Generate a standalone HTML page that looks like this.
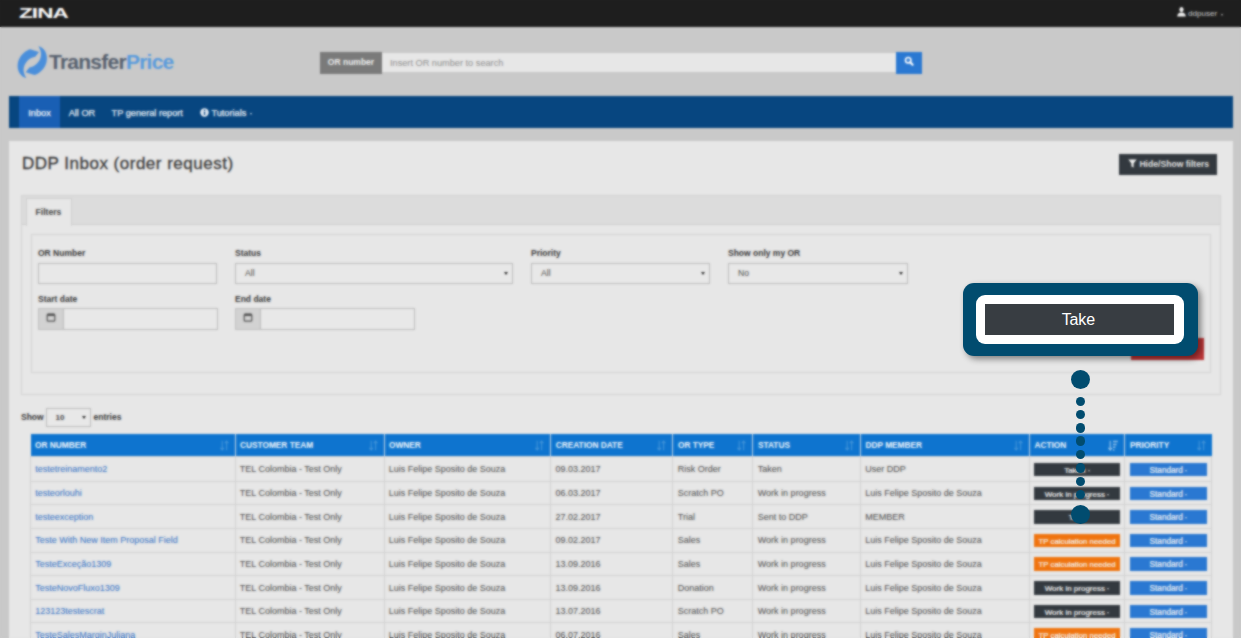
<!DOCTYPE html>
<html><head><meta charset="utf-8"><title>DDP Inbox</title>
<style>
*{box-sizing:border-box;margin:0;padding:0}
html,body{width:1241px;height:638px;overflow:hidden;background:#c9c9c9;font-family:"Liberation Sans",sans-serif;font-size:9px;color:#3c3c3c}
#bg{position:absolute;left:-30px;top:-30px;width:1301px;height:698px;background:#c9c9c9;overflow:hidden}
#pg{position:absolute;left:30px;top:30px;width:1241px;height:668px}
.abs{position:absolute}
#topbar{left:-30px;top:-30px;width:1301px;height:57px;background:#1f1f1f}
#zina{left:19px;top:4px;color:#fff;font-weight:bold;font-size:15px;line-height:18px;transform:scaleX(1.5);transform-origin:0 50%;letter-spacing:-0.6px}
#user{left:1177px;top:7.4px;width:50px;height:12px;color:#cfcfcf;font-size:8.1px;line-height:12px;white-space:nowrap}
#user i{position:absolute;left:43.5px;top:6.2px;width:0;height:0;border-left:1.6px solid transparent;border-right:1.6px solid transparent;border-top:2px solid #bbb}
#logotxt{left:49px;top:47.3px;font-size:21px;line-height:30px;font-weight:bold;color:#56606e;letter-spacing:-0.75px;white-space:nowrap}
#logotxt b{color:#5a9bdc}
#sadd{left:320px;top:52px;width:62px;height:21.5px;background:#7a7a7a;color:#f0f0f0;font-weight:bold;font-size:8.5px;line-height:21.5px;text-align:center}
#sinp{left:382px;top:53px;width:514px;height:19.2px;background:#e6e6e6;color:#8e8e8e;font-size:9.2px;line-height:20.4px;padding-left:8px}
#sbtn{left:896px;top:51.5px;width:26px;height:22px;background:#2a78d2}
#nav{left:9px;top:96px;width:1223.5px;height:32px;background:#074680;color:#e4ecf5;font-size:9.2px;line-height:32px}
#nav .act{left:10px;top:0;width:41px;height:32px;background:#1a5fb4}
#nav span{position:absolute;top:0.7px;white-space:nowrap;-webkit-text-stroke:0.25px #e4ecf5}
#nav i{display:inline-block;width:0;height:0;border-left:1.7px solid transparent;border-right:1.7px solid transparent;border-top:2.2px solid #d5dfea;margin-left:4px;vertical-align:1.2px}
#panel{left:9px;top:141px;width:1223.5px;height:560px;background:#e6e6e6}
#h1{left:22px;top:152.6px;font-size:17px;line-height:22px;color:#3b3b3b;white-space:nowrap;letter-spacing:0.5px;-webkit-text-stroke:0.3px #3b3b3b}
#hsbtn{left:1119px;top:153.5px;width:98px;height:21.5px;background:#343a40;color:#e2e2e2;font-weight:bold;font-size:8.6px;line-height:21.5px;white-space:nowrap}
#tabs{left:21px;top:194.5px;width:1199.8px;height:200.5px;border:1px solid #d3d3d3}
#tabhead{left:0;top:0;width:1197.8px;height:29.5px;background:#dcdcdc;border-bottom:1px solid #d0d0d0}
#tab{left:3.5px;top:2.5px;width:46px;height:28px;background:#e6e6e6;border:1px solid #d0d0d0;border-bottom:none;font-size:8.6px;font-weight:bold;color:#444;text-align:center;line-height:27px}
#fs{left:31px;top:234.2px;width:1179.7px;height:139.3px;border:1px solid #d3d3d3}
.lbl{font-weight:bold;font-size:8.5px;line-height:12px;color:#3a3a3a;white-space:nowrap}
.inp{height:20.5px;border:1px solid #bcbcbc;background:#e8e8e8;font-size:8.6px;line-height:18.5px;color:#484848;padding-left:9px}
.inp i{position:absolute;right:4px;top:7.5px;width:0;height:0;border-left:2.2px solid transparent;border-right:2.2px solid transparent;border-top:3.2px solid #333}
.addon{height:21.5px;width:26px;background:#d2d2d2;border:1px solid #c2c2c2}
#redbtn{left:1130.5px;top:338px;width:73.5px;height:22px;background:#c0393b}
table{position:absolute;left:30px;top:434.2px;border-collapse:collapse;table-layout:fixed;width:1181.5px}
th{background:#0e75cf;color:#f4f8fc;font-weight:bold;font-size:8.3px;text-align:left;height:22px;padding:0 0 0 4.5px;border-left:1.5px solid #c9d6e4;position:relative;white-space:nowrap}
th:first-child{border-left:none}
td{height:23.6px;border:1px solid #d2d2d2;padding:0.4px 0 0 4.3px;font-size:9px;color:#4a4a4a;white-space:nowrap;overflow:hidden;vertical-align:middle}
tbody tr:first-child td{height:25.1px;padding-top:1.2px}
td a{color:#2f6fc4;text-decoration:none}
.bt{display:block;height:13.6px;line-height:15px;font-size:7.8px;color:#f4f4f4;-webkit-text-stroke:0.2px #f4f4f4;text-align:center;margin:0.2px 0 0 0;white-space:nowrap}
.bt u{display:inline-block;width:0;height:0;border-left:1.6px solid transparent;border-right:1.6px solid transparent;border-top:2px solid #e8e8e8;margin-left:2.5px;vertical-align:1px;opacity:.85}
.dk{background:#343a40;width:85.6px;font-size:8px}
.or{background:#f0750f;width:85.6px}
.bl{background:#2a78d2;width:77.4px;font-size:8.2px}
th .so{position:absolute;right:6px;top:5.7px;opacity:.22}
#blur{position:absolute;left:0;top:0;width:1241px;height:638px;backdrop-filter:blur(1px);-webkit-backdrop-filter:blur(1px);opacity:.85}
/* overlay */
#ov{position:absolute;left:0;top:0;width:1241px;height:638px}
#call{left:963px;top:283.2px;width:234.8px;height:72.8px;background:#014c6f;border-radius:11px;box-shadow:3px 3px 6px rgba(0,0,0,.45)}
#callin{left:13px;top:11.8px;width:207.6px;height:49px;background:#fff;border-radius:9px}
#take{left:9px;top:9px;width:188.7px;height:31px;background:#383d42;color:#fff;font-size:16px;line-height:31.4px;text-align:center;letter-spacing:-0.1px;text-indent:-2px}
.dot{position:absolute;background:#014c6f;border-radius:50%}
</style></head><body>
<div id="bg"><div id="pg">
 <div class="abs" id="topbar"></div>
 <div class="abs" id="zina">ZINA</div>
 <div class="abs" id="user"><svg width="9" height="10" viewBox="0 0 9 10" style="position:absolute;left:0;top:0"><ellipse cx="4.5" cy="2.6" rx="2.1" ry="2.5" fill="#f2f2f2"/><path d="M0.3 9.6 C0.3 6.6 2 5.6 4.5 5.6 C7 5.6 8.7 6.6 8.7 9.6Z" fill="#f2f2f2"/></svg><span style="position:absolute;left:11px;top:0.6px">ddpuser</span><i></i></div>
 <svg class="abs" id="logo" style="left:10px;top:38px" width="60" height="48" viewBox="0 0 798 638">
  <g fill="#4a8fdb"><path d="M268 148 C150 185 55 330 128 468 C150 505 185 527 216 532 C168 455 165 375 235 300 C265 268 300 252 336 248 L386 186 Z"/>
  <path d="M268 148 C150 185 55 330 128 468 C150 505 185 527 216 532 C168 455 165 375 235 300 C265 268 300 252 336 248 L386 186 Z" transform="rotate(180 297 320)"/></g>
 </svg>
 <div class="abs" id="logotxt">Transfer<b>Price</b></div>
 <div class="abs" id="sadd">OR number</div>
 <div class="abs" id="sinp">Insert OR number to search</div>
 <div class="abs" id="sbtn"><svg width="26" height="22" viewBox="0 0 26 22"><circle cx="12.2" cy="8.2" r="2.7" fill="none" stroke="#fff" stroke-width="1.6"/><path d="M14.2 10.3 L16.6 12.7" stroke="#fff" stroke-width="2.1" stroke-linecap="round"/></svg></div>
 <div class="abs" id="nav"><div class="abs act"></div>
  <span style="left:19.3px;color:#fff">Inbox</span><span style="left:59.7px">All OR</span><span style="left:102.6px">TP general report</span>
  <span style="left:191px"><svg width="9" height="9" viewBox="0 0 9 9" style="vertical-align:-1.5px"><circle cx="4.5" cy="4.5" r="4.2" fill="#e9eff6"/><rect x="3.8" y="3.7" width="1.5" height="3.2" fill="#074680"/><rect x="3.8" y="1.7" width="1.5" height="1.4" fill="#074680"/></svg> Tutorials<i></i></span>
 </div>
 <div class="abs" id="panel"></div>
 <div class="abs" id="h1">DDP Inbox (order request)</div>
 <div class="abs" id="hsbtn"><svg width="9" height="9" viewBox="0 0 9 9" style="margin-left:9px;vertical-align:-1px"><path d="M0.3 0.5 H8.7 L5.6 4.2 V8.6 L3.4 7.4 V4.2 Z" fill="#f2f2f2"/></svg> Hide/Show filters</div>
 <div class="abs" id="tabs"><div class="abs" id="tabhead"></div><div class="abs" id="tab">Filters</div></div>
 <div class="abs" id="fs"></div>
 <div class="abs lbl" style="left:38px;top:247px">OR Number</div>
 <div class="abs lbl" style="left:235px;top:247px">Status</div>
 <div class="abs lbl" style="left:531px;top:247px">Priority</div>
 <div class="abs lbl" style="left:728px;top:247px">Show only my OR</div>
 <div class="abs inp" style="left:38px;top:263px;width:179.2px"></div>
 <div class="abs inp" style="left:235px;top:263px;width:278px">All<i></i></div>
 <div class="abs inp" style="left:531px;top:263px;width:179px">All<i></i></div>
 <div class="abs inp" style="left:728px;top:263px;width:179.5px">No<i></i></div>
 <div class="abs lbl" style="left:38px;top:293px">Start date</div>
 <div class="abs lbl" style="left:235px;top:293px">End date</div>
 <div class="abs addon" style="left:38px;top:308px"><svg width="24" height="20" viewBox="0 0.8 24 20"><rect x="8.2" y="6" width="7.6" height="7" rx="1" fill="none" stroke="#555" stroke-width="1.2"/><rect x="8.2" y="5.6" width="7.6" height="2.2" fill="#555"/></svg></div>
 <div class="abs inp" style="left:63px;top:308px;width:154.5px;height:21.5px"></div>
 <div class="abs addon" style="left:235px;top:308px"><svg width="24" height="20" viewBox="0 0.8 24 20"><rect x="8.2" y="6" width="7.6" height="7" rx="1" fill="none" stroke="#555" stroke-width="1.2"/><rect x="8.2" y="5.6" width="7.6" height="2.2" fill="#555"/></svg></div>
 <div class="abs inp" style="left:260px;top:308px;width:154.5px;height:21.5px"></div>
 <div class="abs" id="redbtn"></div>
 <div class="abs lbl" style="left:21px;top:411px">Show</div>
 <div class="abs inp" style="left:45.5px;top:408px;width:45.5px;height:19px;line-height:17px;font-weight:bold;font-size:8px;color:#444">10<i style="top:6.5px"></i></div>
 <div class="abs lbl" style="left:93.5px;top:411px">entries</div>
 <table id="tbl"><colgroup><col style="width:204.5px"><col style="width:149px"><col style="width:166.7px"><col style="width:122.3px"><col style="width:80px"><col style="width:107.5px"><col style="width:169px"><col style="width:95.5px"><col style="width:87px"></colgroup>
 <thead><tr><th>OR NUMBER<svg class="so" width="9" height="11" viewBox="0 0 9 11"><path d="M2.2 0.8V9.6M0.4 7.8L2.2 10L4 7.8M6.6 10.2V1.4M4.8 3.2L6.6 1L8.4 3.2" fill="none" stroke="#fff" stroke-width="1.1"/></svg></th><th>CUSTOMER TEAM<svg class="so" width="9" height="11" viewBox="0 0 9 11"><path d="M2.2 0.8V9.6M0.4 7.8L2.2 10L4 7.8M6.6 10.2V1.4M4.8 3.2L6.6 1L8.4 3.2" fill="none" stroke="#fff" stroke-width="1.1"/></svg></th><th>OWNER<svg class="so" width="9" height="11" viewBox="0 0 9 11"><path d="M2.2 0.8V9.6M0.4 7.8L2.2 10L4 7.8M6.6 10.2V1.4M4.8 3.2L6.6 1L8.4 3.2" fill="none" stroke="#fff" stroke-width="1.1"/></svg></th><th>CREATION DATE<svg class="so" width="9" height="11" viewBox="0 0 9 11"><path d="M2.2 0.8V9.6M0.4 7.8L2.2 10L4 7.8M6.6 10.2V1.4M4.8 3.2L6.6 1L8.4 3.2" fill="none" stroke="#fff" stroke-width="1.1"/></svg></th><th>OR TYPE<svg class="so" width="9" height="11" viewBox="0 0 9 11"><path d="M2.2 0.8V9.6M0.4 7.8L2.2 10L4 7.8M6.6 10.2V1.4M4.8 3.2L6.6 1L8.4 3.2" fill="none" stroke="#fff" stroke-width="1.1"/></svg></th><th>STATUS<svg class="so" width="9" height="11" viewBox="0 0 9 11"><path d="M2.2 0.8V9.6M0.4 7.8L2.2 10L4 7.8M6.6 10.2V1.4M4.8 3.2L6.6 1L8.4 3.2" fill="none" stroke="#fff" stroke-width="1.1"/></svg></th><th>DDP MEMBER<svg class="so" width="9" height="11" viewBox="0 0 9 11"><path d="M2.2 0.8V9.6M0.4 7.8L2.2 10L4 7.8M6.6 10.2V1.4M4.8 3.2L6.6 1L8.4 3.2" fill="none" stroke="#fff" stroke-width="1.1"/></svg></th><th>ACTION<svg class="so" style="opacity:.55" width="10" height="11" viewBox="0 0 10 11"><path d="M2.2 0.8V9.6M0.4 7.8L2.2 10L4 7.8" fill="none" stroke="#fff" stroke-width="1.2"/><path d="M5 1.6H9.8M5 4.4H8.6M5 7.2H7.4M5 10H6.4" stroke="#fff" stroke-width="1.5"/></svg></th><th>PRIORITY<svg class="so" width="9" height="11" viewBox="0 0 9 11"><path d="M2.2 0.8V9.6M0.4 7.8L2.2 10L4 7.8M6.6 10.2V1.4M4.8 3.2L6.6 1L8.4 3.2" fill="none" stroke="#fff" stroke-width="1.1"/></svg></th></tr></thead>
 <tbody>
 <tr><td><a>testetreinamento2</a></td><td>TEL Colombia - Test Only</td><td>Luis Felipe Sposito de Souza</td><td>09.03.2017</td><td>Risk Order</td><td>Taken</td><td>User DDP</td><td><span class="bt dk">Taken<u></u></span></td><td><span class="bt bl">Standard<u></u></span></td></tr>
 <tr><td><a>testeorlouhi</a></td><td>TEL Colombia - Test Only</td><td>Luis Felipe Sposito de Souza</td><td>06.03.2017</td><td>Scratch PO</td><td>Work in progress</td><td>Luis Felipe Sposito de Souza</td><td><span class="bt dk">Work in progress<u></u></span></td><td><span class="bt bl">Standard<u></u></span></td></tr>
 <tr><td><a>testeexception</a></td><td>TEL Colombia - Test Only</td><td>Luis Felipe Sposito de Souza</td><td>27.02.2017</td><td>Trial</td><td>Sent to DDP</td><td>MEMBER</td><td><span class="bt dk">Take</span></td><td><span class="bt bl">Standard<u></u></span></td></tr>
 <tr><td><a>Teste With New Item Proposal Field</a></td><td>TEL Colombia - Test Only</td><td>Luis Felipe Sposito de Souza</td><td>09.02.2017</td><td>Sales</td><td>Work in progress</td><td>Luis Felipe Sposito de Souza</td><td><span class="bt or">TP calculation needed</span></td><td><span class="bt bl">Standard<u></u></span></td></tr>
 <tr><td><a>TesteExceção1309</a></td><td>TEL Colombia - Test Only</td><td>Luis Felipe Sposito de Souza</td><td>13.09.2016</td><td>Sales</td><td>Work in progress</td><td>Luis Felipe Sposito de Souza</td><td><span class="bt or">TP calculation needed</span></td><td><span class="bt bl">Standard<u></u></span></td></tr>
 <tr><td><a>TesteNovoFluxo1309</a></td><td>TEL Colombia - Test Only</td><td>Luis Felipe Sposito de Souza</td><td>13.09.2016</td><td>Donation</td><td>Work in progress</td><td>Luis Felipe Sposito de Souza</td><td><span class="bt dk">Work in progress<u></u></span></td><td><span class="bt bl">Standard<u></u></span></td></tr>
 <tr><td><a>123123testescrat</a></td><td>TEL Colombia - Test Only</td><td>Luis Felipe Sposito de Souza</td><td>13.07.2016</td><td>Scratch PO</td><td>Work in progress</td><td>Luis Felipe Sposito de Souza</td><td><span class="bt dk">Work in progress<u></u></span></td><td><span class="bt bl">Standard<u></u></span></td></tr>
 <tr><td><a>TesteSalesMarginJuliana</a></td><td>TEL Colombia - Test Only</td><td>Luis Felipe Sposito de Souza</td><td>06.07.2016</td><td>Sales</td><td>Work in progress</td><td>Luis Felipe Sposito de Souza</td><td><span class="bt or">TP calculation needed</span></td><td><span class="bt bl">Standard<u></u></span></td></tr>
 </tbody></table>
</div></div>
<div id="blur"></div>
<div id="ov">
 <div class="abs" id="call"><div class="abs" id="callin"><div class="abs" id="take">Take</div></div></div>
 <div class="dot" style="left:1071px;top:370.2px;width:19px;height:19px"></div>
 <div class="dot" style="left:1075.7px;top:396.5px;width:9.6px;height:9.6px"></div>
 <div class="dot" style="left:1075.7px;top:409.8px;width:9.6px;height:9.6px"></div>
 <div class="dot" style="left:1075.7px;top:423.1px;width:9.6px;height:9.6px"></div>
 <div class="dot" style="left:1075.7px;top:436.4px;width:9.6px;height:9.6px"></div>
 <div class="dot" style="left:1075.7px;top:449.7px;width:9.6px;height:9.6px"></div>
 <div class="dot" style="left:1075.7px;top:463.1px;width:9.6px;height:9.6px"></div>
 <div class="dot" style="left:1075.7px;top:476.5px;width:9.6px;height:9.6px"></div>
 <div class="dot" style="left:1075.7px;top:489.8px;width:9.6px;height:9.6px"></div>
 <div class="dot" style="left:1071px;top:505px;width:19px;height:19px"></div>
</div>
</body></html>
